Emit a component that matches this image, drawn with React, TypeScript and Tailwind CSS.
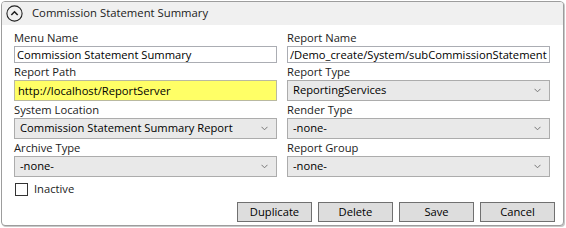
import React from 'react';

const font = "font-['Open_Sans',_'Noto_Sans',_sans-serif]";

const Label: React.FC<{ text: string }> = ({ text }) => (
  <div className="h-[16px] text-[11.2px] leading-[16px] text-[#1b1b1b] whitespace-nowrap">{text}</div>
);

const TextBox: React.FC<{ value: string; yellow?: boolean }> = ({ value, yellow }) =>
  yellow ? (
    <div className="h-[21px] border border-[#b9b9a0] bg-[#ffff66] pl-[3px] text-[11.2px] leading-[19px] text-black whitespace-nowrap overflow-hidden">
      {value}
    </div>
  ) : (
    <div className="h-[17px] border border-[#abadb3] bg-white pl-[2px] text-[11.2px] leading-[15px] text-black whitespace-nowrap overflow-hidden">
      {value}
    </div>
  );

const Combo: React.FC<{ value: string }> = ({ value }) => (
  <div className="flex h-[21px] items-center justify-between border border-[#acacac] bg-[#e9e9e9] pl-[5px] pr-[8px] text-[11.2px] text-black whitespace-nowrap">
    <span>{value}</span>
    <svg width="7" height="5" viewBox="0 0 7 5" fill="none" stroke="#777" strokeWidth="1">
      <path d="M0.5 0.8 L3.5 3.8 L6.5 0.8" />
    </svg>
  </div>
);

const Btn: React.FC<{ text: string }> = ({ text }) => (
  <button
    type="button"
    className="h-[20px] w-[75px] border border-[#707070] bg-[#dddddd] text-[11.2px] leading-[18px] text-black"
  >
    {text}
  </button>
);

export default function App() {
  return (
    <div className={`w-[566px] h-[228px] bg-white pt-[1px] pl-[1px] ${font}`}>
      <div className="flex h-[225px] w-[563px] flex-col overflow-hidden rounded-[4px] border border-[#9d9d9d] bg-white shadow-[1px_1px_0_#c8c8c8]">
        <div className="flex h-[23px] shrink-0 items-center bg-[#f0f0f0] pl-[4px]">
          <svg width="17" height="17" viewBox="0 0 17 17" fill="none" stroke="#222" strokeWidth="1.1">
            <circle cx="8.5" cy="8.5" r="7.6" />
            <path d="M5.3 10 L8.5 6.8 L11.7 10" strokeWidth="1.6" />
          </svg>
          <span className="ml-[9px] text-[11.3px] text-[#1b1b1b] whitespace-nowrap">Commission Statement Summary</span>
        </div>
        <div className="flex flex-1 flex-col pl-[12px] pt-[5px]">
          <div className="grid grid-cols-[263px_263px] gap-x-[10px] gap-y-[1px]">
            <div>
              <Label text="Menu Name" />
              <TextBox value="Commission Statement Summary" />
            </div>
            <div>
              <Label text="Report Name" />
              <TextBox value="/Demo_create/System/subCommissionStatement" />
            </div>
            <div>
              <Label text="Report Path" />
              <TextBox value="http://localhost/ReportServer" yellow />
            </div>
            <div>
              <Label text="Report Type" />
              <Combo value="ReportingServices" />
            </div>
            <div>
              <Label text="System Location" />
              <Combo value="Commission Statement Summary Report" />
            </div>
            <div>
              <Label text="Render Type" />
              <Combo value="-none-" />
            </div>
            <div>
              <Label text="Archive Type" />
              <Combo value="-none-" />
            </div>
            <div>
              <Label text="Report Group" />
              <Combo value="-none-" />
            </div>
          </div>
          <div className="mt-[4px] flex h-[16px] items-center">
            <div className="ml-[1px] h-[13px] w-[13px] border border-[#333] bg-white" />
            <span className="ml-[6px] text-[11.2px] text-[#1b1b1b]">Inactive</span>
          </div>
          <div className="mt-[5px] flex justify-end gap-[6px] pr-[8px]">
            <Btn text="Duplicate" />
            <Btn text="Delete" />
            <Btn text="Save" />
            <Btn text="Cancel" />
          </div>
        </div>
      </div>
    </div>
  );
}
